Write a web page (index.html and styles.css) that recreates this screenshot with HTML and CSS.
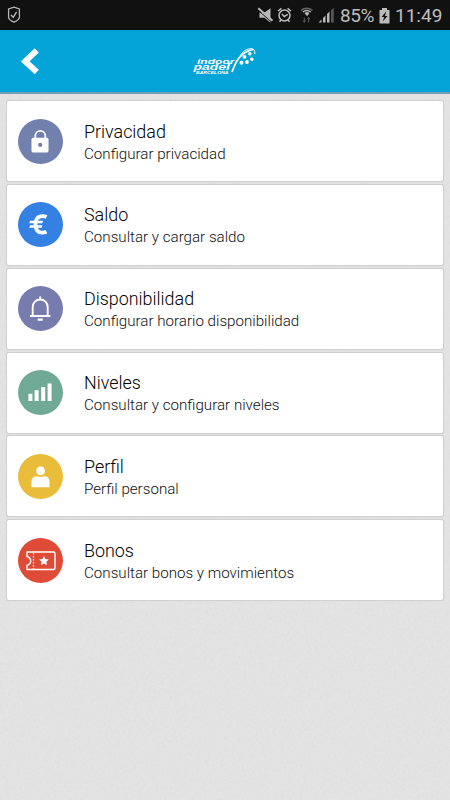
FILE: index.html
```html
<!DOCTYPE html>
<html lang="es">
<head>
<meta charset="utf-8">
<title>Indoor Padel Barcelona</title>
<link rel="stylesheet" href="styles.css">
</head>
<body>
<div class="status">
  <svg class="shield" width="14" height="18" viewBox="0 0 14 18"><path d="M7 1.200 12.400 3v8.200c0 2-2.200 3.500-5.400 5-3.200-1.500-5.400-3-5.400-5V3z" fill="none" stroke="#b5b5b5" stroke-width="1.300"/><path d="M4 9l2.200 2.300L9.600 5.800" fill="none" stroke="#b5b5b5" stroke-width="1.400"/></svg>
  <svg class="indicators" width="80" height="22" viewBox="256 5 80 22">
    <g fill="#b9b9b9" stroke="none">
      <path d="M259.500 12.500h5l6-4.300v14.500l-6-5h-5z"/>
      <path d="M257.500 9.800l15 13" stroke="#111" stroke-width="1"/>
      <path d="M258.300 8.300l14.200 12.500" stroke="#b9b9b9" stroke-width="2"/>
      <path d="M318.500 22.500l3-3v3zM323 22.500v-4.500l2.500-2.500v7zM327 22.500v-8.500l2.500-2.500v11z"/>
      <path d="M331 22.500V10.200l2.800-2.500v14.800z" fill="#555"/>
      <path d="M304.500 13a4 3.500 0 0 1 5 0L307 16.200z"/>
    </g>
    <g fill="none" stroke="#b9b9b9" stroke-width="1.500">
      <circle cx="284.500" cy="15.500" r="5.500"/><path d="M281.800 14l2.500 2.500 3.500-2.200M278 11l3.400-2.700M291 11l-3.400-2.700M281 20l-1.500 1.700M288 20l1.500 1.700"/>
      <path d="M301 10.300q5.500-4.300 11.500 0" stroke="#666"/><path d="M302.800 12q4-2.800 8 0"/>
      <path d="M304.300 17.500v5M303 20.500l1.300 1.700 1.200-1.700M308.700 22.500v-5M307.400 19.200l1.300-1.700 1.300 1.700" stroke="#5c5c5c" stroke-width="1"/>
    </g>
  </svg>
  <span class="percent">85%</span>
  <svg class="battery" width="11" height="16" viewBox="0 0 11 16"><path d="M3 0h5v2h2.500v13.500H.5V2H3z" fill="#bcbcbc"/><path d="M7.200 3.500 2.500 9h2.700l-1.500 4.500L8.600 8H6z" fill="#111"/></svg>
  <span class="clock">11:49</span>
</div>
<header class="bar">
  <svg class="back" width="20" height="28" viewBox="20 47 20 28"><path d="M36.800 50.300 25.200 61.400 36.800 72" fill="none" stroke="#fff" stroke-width="6"/></svg>
  <svg class="logo" width="66" height="28" viewBox="191 48 66 28">
    <g class="logo-text" fill="#fff">
      <text x="197" y="64.600" font-size="8" textLength="37.500" lengthAdjust="spacingAndGlyphs">indoor</text>
      <text x="193.500" y="71" font-size="8.500" textLength="36.500" lengthAdjust="spacingAndGlyphs">padel</text>
      <text x="196" y="74.600" font-size="3.400" textLength="32.500" lengthAdjust="spacingAndGlyphs">BARCELONA</text>
    </g>
    <path d="M232 73C236 62 240 53.500 253 50.500" fill="none" stroke="#fff" stroke-width="1.700"/>
    <path d="M240 57q4.500-7.500 11.500-7.300 4 .4 3.200 5.300" fill="none" stroke="#fff" stroke-width="1"/>
    <g fill="#fff"><circle cx="249.800" cy="54.800" r="1.800"/><circle cx="244.500" cy="57.800" r="1.900"/><circle cx="241.500" cy="63.800" r="2"/><circle cx="247" cy="63" r="1.900"/><circle cx="251.800" cy="60.300" r="1.800"/></g>
  </svg>
</header>
<main class="list">
  <section class="card">
    <svg class="icon lock" viewBox="0 0 45 45"><path d="M17.300 20v-3.200a5 5 0 0 1 10 0V20" fill="none" stroke="#fff" stroke-width="1.800"/><rect x="13.500" y="18.700" width="17" height="14.800" rx="1.600" fill="#fff"/><circle cx="22.200" cy="25.900" r="2.100" fill="#7180ad"/></svg>
    <div class="copy"><h2>Privacidad</h2><p>Configurar privacidad</p></div>
  </section>
  <section class="card">
    <svg class="icon euro" viewBox="0 0 45 45"><path d="M28.500 15.100q-2-.9-4-.9-7 0-7 8.200t7 8.200q2 0 4-.9" fill="none" stroke="#fff" stroke-width="3.800"/><path d="M12 18.800h13l-.7 2.400H11.300zM12 23.300h12.400l-.7 2.400H11.300z" fill="#fff"/></svg>
    <div class="copy"><h2>Saldo</h2><p>Consultar y cargar saldo</p></div>
  </section>
  <section class="card">
    <svg class="icon bell" viewBox="0 0 45 45"><path d="M14.700 29.500V21a7.500 7.500 0 0 1 15 0v8.500M12 30h20.400M22.200 10.500v3" fill="none" stroke="#fff" stroke-width="1.900"/><path d="M19.700 32.500h5v2.300h-5z" fill="#fff"/></svg>
    <div class="copy"><h2>Disponibilidad</h2><p>Configurar horario disponibilidad</p></div>
  </section>
  <section class="card">
    <svg class="icon levels" viewBox="0 0 45 45"><path d="M10.400 23.800h4V31h-4zM16.600 20.300h4V31h-4zM23.200 17h4v14h-4zM29.600 13.400h4V31h-4z" fill="#fff"/></svg>
    <div class="copy"><h2>Niveles</h2><p>Consultar y configurar niveles</p></div>
  </section>
  <section class="card">
    <svg class="icon person" viewBox="0 0 45 45"><circle cx="22.600" cy="16.800" r="4.400" fill="#fff"/><path d="M13.500 33.300v-5.500q0-5.500 5.500-5.500 3.500 1.200 7 0 5.500 0 5.500 5.500v5.500z" fill="#fff"/></svg>
    <div class="copy"><h2>Perfil</h2><p>Perfil personal</p></div>
  </section>
  <section class="card">
    <svg class="icon ticket" viewBox="0 0 45 45"><path d="M9 14h26.500q1.500 0 1.500 1.500V30q0 1.500-1.500 1.500H9v-4.300q3.700-.7 3.700-4.200T9 18.500z" fill="none" stroke="#fff" stroke-width="1.400" stroke-linejoin="round"/><path d="M15.500 15v16" stroke="#fff" stroke-width="1.300" stroke-dasharray="1.600 1.400"/><path d="M26 17.900l1.500 3.100 3.400.4-2.500 2.400.6 3.500-3-1.700-3 1.700.6-3.500-2.500-2.400 3.400-.4z" fill="#fff"/></svg>
    <div class="copy"><h2>Bonos</h2><p>Consultar bonos y movimientos</p></div>
  </section>
</main>
</body>
</html>
```
FILE: styles.css
```css
* { box-sizing: border-box; }
body {
  margin: 0;
  height: 800px;
  overflow: hidden;
  font-family: Roboto, "Liberation Sans", sans-serif;
  background: #e4e4e4 url("data:image/svg+xml,%3Csvg xmlns='http://www.w3.org/2000/svg' width='150' height='150'%3E%3Cfilter id='n'%3E%3CfeTurbulence type='fractalNoise' baseFrequency='.35' numOctaves='2' stitchTiles='stitch'/%3E%3CfeColorMatrix type='saturate' values='0'/%3E%3C/filter%3E%3Crect width='150' height='150' filter='url(%23n)' opacity='.08'/%3E%3C/svg%3E");
}
.status {
  display: flex;
  align-items: center;
  height: 30px;
  padding: 0 8px 0 7px;
  background: #111;
  color: #bdbdbd;
  font-size: 19px;
  line-height: 30px;
  white-space: nowrap;
}
.indicators { margin: 2px 4px 0 auto; }
.percent { width: 35px; padding-top: 2px; letter-spacing: -0.4px; }
.battery { margin: 1px 5px 0 4px; }
.clock { width: 47px; padding-top: 2px; }
.bar {
  display: flex;
  align-items: center;
  height: 64px;
  padding-left: 20px;
  background: #04a4d8;
  border-bottom: 2px solid #6f9db6;
}
.logo { margin-left: 151px; }
.logo-text { font-family: "Liberation Sans", sans-serif; font-weight: 700; font-style: italic; }
.list {
  display: flex;
  flex-direction: column;
  gap: 3.8px;
  padding: 7.200px 7px 0;
}
.card {
  display: flex;
  align-items: center;
  height: 80px;
  padding-left: 10.500px;
  background: #fff;
  border-radius: 2px;
  box-shadow: 0 0 1px 0.500px #cfcfcf;
}
.icon { width: 45px; height: 45px; border-radius: 50%; flex: none; }
.lock { background: #7180ad; }
.euro { background: #3480e3; }
.bell { background: #777cae; }
.levels { background: #70a996; }
.person { background: #e9bc3a; }
.ticket { background: #e04b38; }
.copy { margin-left: 21.500px; padding-top: 3px; }
h2, p { margin: 0; font-weight: 300; }
h2 { font-size: 17.9px; line-height: 22px; color: #000; }
p { font-size: 15.150px; line-height: 22px; color: #111; }
```
